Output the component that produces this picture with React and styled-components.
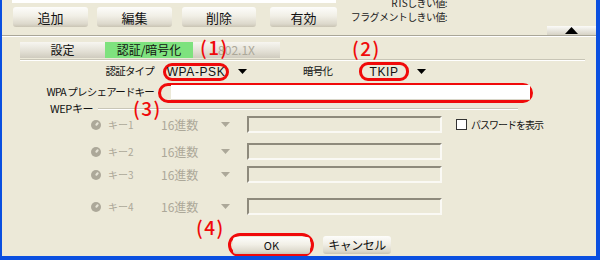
import React from "react";
import styled, { createGlobalStyle } from "styled-components";

const Global = createGlobalStyle`
  html, body { margin: 0; padding: 0; background: #ECE9D8; }
  body { font-family: "Noto Sans CJK JP", "Noto Sans", sans-serif; }
`;

const XP_BLUE = "#0A4FE0";
const DISABLED = "#ACA899";

const Frame = styled.div`
  position: relative;
  width: 600px;
  height: 260px;
  box-sizing: border-box;
  background: #ECE9D8;
  border-left: 2px solid ${XP_BLUE};
  border-right: 4px solid ${XP_BLUE};
  border-bottom: 4px solid ${XP_BLUE};
  overflow: hidden;
  color: #000;
  font-family: "Noto Sans CJK JP", "Noto Sans", sans-serif;
`;

const TopBar = styled.div`
  display: flex;
  height: 35px;
`;

const TopLeft = styled.div`
  display: flex;
  flex-direction: column;
  padding-left: 10px;
`;

const WhiteStrip = styled.div`
  width: 324px;
  height: 3px;
  background: #fff;
`;

const ButtonRow = styled.div`
  display: flex;
  margin-top: 4px;
  padding-left: 1px;
`;

const XpButton = styled.div`
  box-sizing: border-box;
  width: ${(p) => p.$w}px;
  height: ${(p) => p.$h || 20}px;
  margin-left: ${(p) => p.$gap || 0}px;
  border-radius: 3px;
  background: linear-gradient(#FDFDFB 0%, #F1EFE6 45%, #DCD8CB 85%, #C9C4B4 100%);
  display: flex;
  align-items: center;
  justify-content: center;
  font-size: ${(p) => p.$fs || 13}px;
  letter-spacing: ${(p) => p.$ls || 0}px;
  line-height: 1;
  color: #111;
`;

const Thresholds = styled.div`
  width: 110px;
  margin-top: -4px;
  text-align: right;
  font-size: 10px;
  letter-spacing: -0.6px;
  line-height: 14px;
  color: #222;
`;

const CollapseButton = styled.div`
  margin-left: auto;
  align-self: flex-end;
  width: 49px;
  height: 9px;
  background: linear-gradient(#FBFBF8, #D6D2C5);
  display: flex;
  align-items: center;
  justify-content: center;
`;

const Separator = styled.div`
  height: 0;
  border-top: 1px solid #A9A698;
  border-bottom: 1px solid #FFFFFF;
`;

const TabStrip = styled.div`
  display: flex;
  margin-top: 5px;
  padding-left: 18px;
`;

const Tab = styled.div`
  width: ${(p) => p.$w}px;
  height: 16px;
  display: flex;
  align-items: center;
  justify-content: center;
  font-size: 12px;
  line-height: 1;
  color: ${(p) => (p.$disabled ? DISABLED : "#111")};
  background: ${(p) =>
    p.$active ? "#7EE27E" : "linear-gradient(#F7F6F1, #E2DFD4 60%, #CFCBBE)"};
`;

const TabRule = styled.div`
  margin: 1px 11px 0 18px;
  border-top: 1px solid #C8C5B6;
  border-bottom: 1px solid #FFFFFF;
`;

const FieldRow = styled.div`
  display: flex;
  align-items: center;
  height: ${(p) => p.$h}px;
  margin-top: ${(p) => p.$mt || 0}px;
`;

const Label = styled.div`
  width: ${(p) => p.$w || 152}px;
  margin-left: ${(p) => p.$ml || 0}px;
  text-align: ${(p) => p.$align || "right"};
  font-size: 10.5px;
  letter-spacing: -0.8px;
  line-height: 1;
  white-space: nowrap;
  color: #111;
`;

const Ring = styled.div`
  box-sizing: border-box;
  width: ${(p) => p.$w}px;
  height: ${(p) => p.$h}px;
  margin-left: ${(p) => p.$ml || 0}px;
  border: 3px solid #F00A0A;
  border-radius: ${(p) => p.$r || 9}px;
  display: flex;
  align-items: center;
  justify-content: ${(p) => p.$justify || "center"};
  padding: ${(p) => p.$pad || "0"};
`;

const ComboText = styled.span`
  font-family: "Liberation Sans", "Noto Sans", sans-serif;
  font-size: 12px;
  line-height: 1;
  letter-spacing: 0.6px;
  color: #111;
`;

const Arrow = styled.svg`
  margin-left: ${(p) => p.$ml || 0}px;
  flex: none;
`;

const WhiteField = styled.div`
  flex: 1;
  height: 14px;
  background: #fff;
  border-bottom: 1px solid #D8D5C8;
`;

const GroupHeader = styled.div`
  display: flex;
  align-items: center;
  height: 13px;
  padding-left: 48px;
  margin-right: 78px;
`;

const GroupTitle = styled.span`
  font-size: 11px;
  letter-spacing: -0.4px;
  line-height: 1;
  color: #111;
  margin-right: 5px;
`;

const GroupLine = styled.div`
  flex: 1;
  border-top: 1px solid #C9C6B7;
  border-bottom: 1px solid #FFFFFF;
`;

const KeyRow = styled.div`
  display: flex;
  align-items: center;
  height: 17px;
  margin-top: ${(p) => p.$mt}px;
  padding-left: 89px;
`;

const Radio = styled.div`
  position: relative;
  width: 10px;
  height: 10px;
  border-radius: 50%;
  background: ${DISABLED};
  flex: none;
  &::after {
    content: "";
    position: absolute;
    left: 5px;
    top: 2px;
    width: 2px;
    height: 4px;
    border-radius: 1px;
    background: #E6E3D6;
    transform: rotate(40deg);
  }
`;

const KeyName = styled.span`
  width: 53px;
  margin-left: 7px;
  font-size: 10px;
  line-height: 1;
  color: ${DISABLED};
`;

const Radix = styled.span`
  width: 60px;
  font-size: 12px;
  line-height: 1;
  color: ${DISABLED};
`;

const SunkenBox = styled.div`
  box-sizing: border-box;
  width: 195px;
  height: 17px;
  margin-left: 17px;
  border-top: 2px solid #8E8A7C;
  border-left: 2px solid #8E8A7C;
  border-bottom: 2px solid #FAF9F4;
  border-right: 2px solid #FAF9F4;
  background: #ECE9D8;
`;

const CheckBox = styled.div`
  box-sizing: border-box;
  width: 11px;
  height: 11px;
  margin-left: 14px;
  border: 1px solid #333;
  background: #fff;
`;

const CheckLabel = styled.span`
  margin-left: 4px;
  font-size: 10px;
  letter-spacing: -1px;
  line-height: 1;
  color: #111;
`;

const Footer = styled.div`
  display: flex;
  align-items: center;
  margin-top: 18px;
  padding-left: 226px;
`;

const Annotation = styled.div`
  position: absolute;
  font-family: "Noto Sans CJK JP", "Noto Sans", sans-serif;
  font-size: 19px;
  font-weight: 500;
  line-height: 22px;
  letter-spacing: 1.5px;
  color: #F00A0A;
  white-space: nowrap;
`;

const DownArrow = ({ color = "#000", ml }) => (
  <Arrow $ml={ml} width="9" height="5" viewBox="0 0 9 5">
    <polygon points="0,0 9,0 4.5,5" fill={color} />
  </Arrow>
);

const keys = [
  { name: "キー1", mt: 1 },
  { name: "キー2", mt: 10 },
  { name: "キー3", mt: 6 },
  { name: "キー4", mt: 15 },
];

export default function App() {
  return (
    <>
      <Global />
      <Frame>
        <TopBar>
          <TopLeft>
            <WhiteStrip />
            <ButtonRow>
              <XpButton $w={75}>追加</XpButton>
              <XpButton $w={75} $gap={9}>編集</XpButton>
              <XpButton $w={74} $gap={10}>削除</XpButton>
              <XpButton $w={67} $gap={14}>有効</XpButton>
            </ButtonRow>
          </TopLeft>
          <Thresholds>
            RTSしきい値:
            <br />
            フラグメントしきい値:
          </Thresholds>
          <CollapseButton>
            <svg width="13" height="7" viewBox="0 0 13 7">
              <polygon points="6.5,0 13,7 0,7" fill="#000" />
            </svg>
          </CollapseButton>
        </TopBar>
        <Separator />
        <TabStrip>
          <Tab $w={85}>設定</Tab>
          <Tab $w={88} $active>認証/暗号化</Tab>
          <Tab $w={87} $disabled>802.1X</Tab>
        </TabStrip>
        <TabRule />

        <FieldRow $h={19} $mt={1}>
          <Label>認証タイプ</Label>
          <Ring $w={66} $h={18} $ml={9}>
            <ComboText>WPA-PSK</ComboText>
          </Ring>
          <DownArrow ml={9} />
          <Label $w={40} $ml={56} $align="left">暗号化</Label>
          <Ring $w={50} $h={19} $ml={16}>
            <ComboText>TKIP</ComboText>
          </Ring>
          <DownArrow ml={8} />
        </FieldRow>

        <FieldRow $h={19} $mt={2}>
          <Label>WPA プレシェアードキー</Label>
          <Ring $w={375} $h={20} $ml={4} $r={10} $justify="flex-start" $pad="0 0 0 10px">
            <WhiteField />
          </Ring>
        </FieldRow>

        <GroupHeader>
          <GroupTitle>WEPキー</GroupTitle>
          <GroupLine />
        </GroupHeader>

        {keys.map((k, i) => (
          <KeyRow key={k.name} $mt={k.mt}>
            <Radio />
            <KeyName>{k.name}</KeyName>
            <Radix>16進数</Radix>
            <DownArrow color={DISABLED} />
            <SunkenBox />
            {i === 0 && (
              <>
                <CheckBox />
                <CheckLabel>パスワードを表示</CheckLabel>
              </>
            )}
          </KeyRow>
        ))}

        <Footer>
          <Ring $w={86} $h={24} $r={12} $justify="flex-start" $pad="0 0 0 2px">
            <XpButton $w={77} $h={17} $fs={11}>OK</XpButton>
          </Ring>
          <XpButton $w={68} $h={18} $gap={9} $fs={12} $ls={-0.5}>キャンセル</XpButton>
        </Footer>

        <Annotation style={{ left: 198, top: 36 }}>(1)</Annotation>
        <Annotation style={{ left: 350, top: 37 }}>(2)</Annotation>
        <Annotation style={{ left: 131, top: 97 }}>(3)</Annotation>
        <Annotation style={{ left: 194, top: 216 }}>(4)</Annotation>
      </Frame>
    </>
  );
}
